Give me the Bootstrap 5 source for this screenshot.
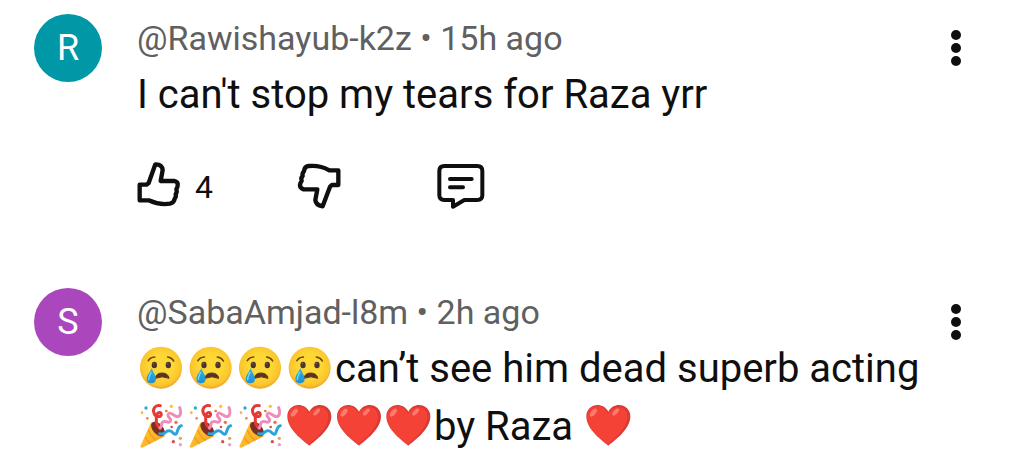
<!DOCTYPE html>
<html lang="en">
<head>
<meta charset="utf-8">
<meta name="viewport" content="width=device-width, initial-scale=1">
<title>Comments</title>
<link href="https://cdn.jsdelivr.net/npm/bootstrap@5.3.0/dist/css/bootstrap.min.css" rel="stylesheet">
<style>
body{font-family:Roboto,"Liberation Sans",sans-serif;color:#0f0f0f;background:#fff}
.thread{padding:0 34px}
.entry{padding-top:12px}
.avatar{width:68px;height:68px;font-size:36px;color:#fff;margin:2px 35px 0 0}
.teal{background:#0097a7}
.purple{background:#ab47bc}
.meta{font-size:34px;line-height:52px;color:#606060;margin-bottom:2px}
.meta a{color:inherit}
.message{font-size:40px;line-height:58px}
.actions{margin-top:36px;height:50px;margin-bottom:64px}
.actions .btn,.more{color:#0f0f0f;border:0;padding:0}
.actions .like{width:160px;gap:12px;font-size:32px;line-height:44px}
.dislike{width:139px}
.more{width:20px;height:40px;margin:16px 24px 0 0}
.emoji{vertical-align:-10px;overflow:visible}
svg{display:inline-block;flex:none}
</style>
</head>
<body>
<svg width="0" height="0" class="position-absolute" aria-hidden="true">
<defs>
<radialGradient id="skin" cx=".5" cy=".45" r=".55"><stop offset=".5" stop-color="#fdd835"/><stop offset=".85" stop-color="#fbc52c"/><stop offset="1" stop-color="#f2a227"/></radialGradient>
<linearGradient id="drop" x1="0" y1="0" x2="0" y2="1"><stop offset="0" stop-color="#29b6e8"/><stop offset="1" stop-color="#1e8fd0"/></linearGradient>
<linearGradient id="cone" x1="0" y1="0" x2="1" y2="1"><stop offset="0" stop-color="#ffca28"/><stop offset=".6" stop-color="#fbb52a"/><stop offset="1" stop-color="#e08a1e"/></linearGradient>
<g id="cry">
<circle cx="93" cy="83" r="63" fill="url(#skin)"/>
<ellipse cx="73" cy="75" rx="8" ry="10" fill="#4e342e"/><ellipse cx="115" cy="75" rx="8" ry="10" fill="#4e342e"/>
<circle cx="71" cy="71" r="2" fill="#8d6e63"/><circle cx="113" cy="71" r="2" fill="#8d6e63"/>
<path d="M55 62Q60 52 74 51M113 51Q126 53 131 63" fill="none" stroke="#6d4310" stroke-width="5" stroke-linecap="round"/>
<path d="M76 115Q78 99 97 99Q115 100 117 115Q97 106 76 115Z" fill="#5a3420" stroke="#5a3420" stroke-width="3" stroke-linejoin="round"/>
<path d="M65 84C61 96 50 105 50 117C50 125 56 130 64 130C72 130 78 125 78 117C78 105 68 96 65 84Z" fill="url(#drop)"/>
<path d="M63 97C60 105 55 111 56 119" fill="none" stroke="#81d4fa" stroke-width="4" stroke-linecap="round"/>
</g>
<g id="popper">
<path d="M64 80L31 154Q31 159 37 158L106 123Q92 118 80 104Q70 92 64 80Z" fill="url(#cone)"/>
<path d="M55 105Q62 124 79 136M46 126Q50 138 61 146" fill="none" stroke="#ef9b20" stroke-width="4"/>
<ellipse cx="84" cy="102" rx="15" ry="26" transform="rotate(-43 84 102)" fill="#7b2e25"/>
<path d="M91 32C76 28 67 42 72 54C76 67 94 68 94 58C93 47 79 53 79 66C79 80 77 90 91 100" fill="none" stroke="#e53935" stroke-width="9" stroke-linecap="round"/>
<path d="M90 99C98 96 90 83 101 80C111 77 113 86 120 80C128 70 112 69 114 59C119 46 130 64 142 65C153 64 154 49 149 38" fill="none" stroke="#ed8dba" stroke-width="9" stroke-linecap="round"/>
<path d="M89 116C108 122 105 105 118 107C130 107 127 121 138 117C144 113 141 96 154 92" fill="none" stroke="#29a5da" stroke-width="9" stroke-linecap="round"/>
<g><circle cx="48" cy="39" r="5" fill="#29a5da"/><circle cx="36" cy="53" r="4" fill="#f9b43b"/><circle cx="52" cy="70" r="4" fill="#e58b43"/><circle cx="109" cy="48" r="4" fill="#e5753d"/><circle cx="124" cy="34" r="5" fill="#fbc02d"/><circle cx="138" cy="82" r="5" fill="#e57346"/><circle cx="125" cy="96" r="4" fill="#e04c43"/><circle cx="130" cy="140" r="5" fill="#d94c54"/><circle cx="151" cy="130" r="5" fill="#e9a650"/><circle cx="151" cy="149" r="5" fill="#dfa0ce"/></g>
</g>
<g id="heart">
<path d="M88 152C70 137 22 104 22 64C22 28 69 16 88 50C106 16 154 28 154 64C154 104 106 137 88 152Z" fill="#d93a35"/>
<path d="M86 149C67 133 24 103 24 64C24 31 69 20 87 56C102 27 145 31 145 64C145 101 104 133 86 149Z" fill="#f44336"/>
<ellipse cx="43" cy="53" rx="7" ry="14" transform="rotate(38 43 53)" fill="#ff7a70"/><ellipse cx="110" cy="51" rx="6" ry="13" transform="rotate(43 110 51)" fill="#ff7a70"/>
</g>
<g id="dots"><circle cx="10" cy="7" r="5"/><circle cx="10" cy="20" r="5"/><circle cx="10" cy="33" r="5"/></g>
</defs>
</svg>

<main class="thread">
<article class="entry d-flex align-items-start">
<div class="avatar teal rounded-circle d-flex align-items-center justify-content-center flex-shrink-0">R</div>
<div class="flex-grow-1">
<div class="meta"><a href="#" class="text-decoration-none">@Rawishayub-k2z</a> • 15h ago</div>
<p class="message mb-0">I can't stop my tears for Raza yrr</p>
<div class="actions d-flex align-items-center">
<button type="button" class="btn like d-flex align-items-center" aria-label="Like, 4">
<svg width="46" height="48" viewBox="51 33 138 144" fill="none" stroke="#0f0f0f" stroke-width="13" stroke-linejoin="round" aria-hidden="true"><path d="M59 104H80L86 99L106 43Q126 42 128 60L122 93H164Q175 96 173 106Q173 112 169 117Q172 127 167 132Q169 141 164 146Q163 158 150 161Q118 166 86 151H59Z"/></svg><span class="pt-1">4</span></button>
<button type="button" class="btn dislike text-start d-flex" aria-label="Dislike">
<svg width="46" height="48" viewBox="51 33 138 144" fill="none" stroke="#0f0f0f" stroke-width="13" stroke-linejoin="round" aria-hidden="true"><path d="M175 105H156L150 110L128 169Q107 165 106 150L112 118H70Q59 113 60 104Q61 98 65 93Q62 83 68 78Q66 69 72 64Q73 50 86 48Q121 45 148 61H175Z"/></svg></button>
<button type="button" class="btn d-flex" aria-label="Reply">
<svg width="50" height="48" viewBox="468 33 150 144" fill="none" stroke="#0f0f0f" stroke-width="12" stroke-linejoin="round" stroke-linecap="round" aria-hidden="true"><path d="M493 48H592Q607 48 607 63V136Q607 150 592 150H553L519 170V150H493Q478 150 478 136V63Q478 48 493 48ZM510 87H575M510 112H549"/></svg></button>
</div>
</div>
<button type="button" class="btn more d-flex flex-shrink-0" aria-label="More options"><svg width="20" height="40" fill="#0f0f0f" aria-hidden="true"><use href="#dots"/></svg></button>
</article>

<article class="entry d-flex align-items-start">
<div class="avatar purple rounded-circle d-flex align-items-center justify-content-center flex-shrink-0">S</div>
<div class="flex-grow-1">
<div class="meta"><a href="#" class="text-decoration-none">@SabaAmjad-l8m</a> • 2h ago</div>
<p class="message mb-0"><svg class="emoji" width="198" height="48" viewBox="21 12 594 144" role="img" aria-label="Four crying faces"><use href="#cry"/><use href="#cry" x="149"/><use href="#cry" x="297"/><use href="#cry" x="446"/></svg>can’t see him dead superb acting<br><svg class="emoji" width="297" height="48" viewBox="21 21 891 144" role="img" aria-label="Three party poppers and three hearts"><use href="#popper"/><use href="#popper" x="148"/><use href="#popper" x="297"/><use href="#heart" x="450"/><use href="#heart" x="599"/><use href="#heart" x="747"/></svg>by Raza <svg class="emoji" width="49" height="48" viewBox="12 21 147 144" role="img" aria-label="Heart"><use href="#heart"/></svg></p>
</div>
<button type="button" class="btn more d-flex flex-shrink-0" aria-label="More options"><svg width="20" height="40" fill="#0f0f0f" aria-hidden="true"><use href="#dots"/></svg></button>
</article>
</main>
<script src="https://cdn.jsdelivr.net/npm/bootstrap@5.3.0/dist/js/bootstrap.bundle.min.js"></script>
</body>
</html>
